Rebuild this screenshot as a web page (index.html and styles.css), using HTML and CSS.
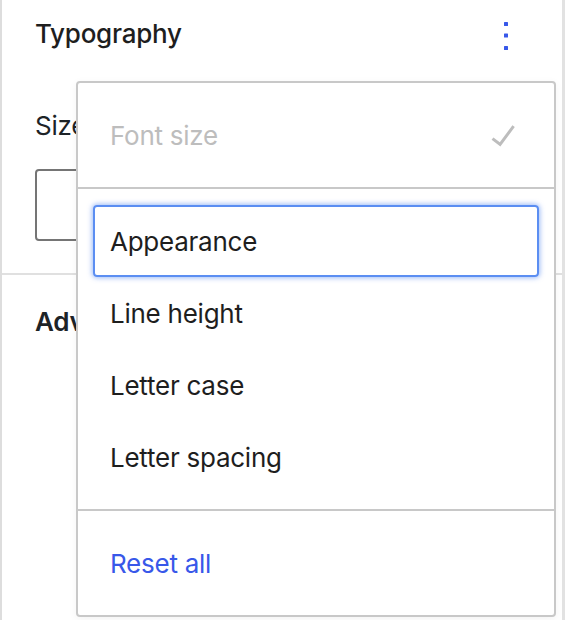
FILE: index.html
```html
<!DOCTYPE html>
<html lang="en">
<head>
<meta charset="utf-8">
<title>Typography panel</title>
<link rel="stylesheet" href="styles.css">
</head>
<body>
<div class="panel">
  <section class="panel-section typography">
    <div class="panel-header">
      <h2 class="panel-title">Typography</h2>
      <button class="menu-toggle" aria-label="Typography options">
        <svg width="48" height="48" viewBox="0 0 48 48" aria-hidden="true">
          <rect x="22" y="19" width="4" height="4" rx="0.5"/>
          <rect x="22" y="30.5" width="4" height="4" rx="0.5"/>
          <rect x="22" y="43" width="4" height="4" rx="0.5"/>
        </svg>
      </button>
    </div>
    <div class="field-label">Size</div>
    <div class="size-input"></div>
  </section>
  <section class="panel-section advanced">
    <h2 class="panel-subtitle">Adv<span class="hidden-rest">anced</span></h2>
  </section>

  <div class="popover" role="menu">
    <div class="menu-group">
      <div class="menu-item disabled">
        <span>Font size</span>
        <svg class="check" width="48" height="48" viewBox="0 0 24 24" aria-hidden="true">
          <path d="M16.7 7.1l-6.3 8.5-3.2-2.4-.9 1.2 4.4 3.3 7.2-9.7z"/>
        </svg>
      </div>
    </div>
    <div class="menu-group">
      <div class="menu-item focused">Appearance</div>
      <div class="menu-item">Line height</div>
      <div class="menu-item">Letter case</div>
      <div class="menu-item">Letter spacing</div>
    </div>
    <div class="menu-group">
      <div class="menu-item reset">Reset all</div>
    </div>
  </div>
</div>
</body>
</html>
```

FILE: styles.css
```css
* { box-sizing: border-box; }

html, body {
  margin: 0;
  padding: 0;
  background: #ffffff;
}

body {
  font-family: Inter, "Noto Sans", "Liberation Sans", sans-serif;
  letter-spacing: -0.25px;
  width: 568px;
  height: 620px;
  overflow: hidden;
}

.panel {
  position: relative;
  width: 565px;
  height: 620px;
  border-left: 2px solid #dddddd;
  border-right: 3px solid #e2e2e2;
  background: #ffffff;
}

.panel-section {
  padding: 0 32px 0 33px;
}

.typography {
  padding-top: 10px;
  padding-bottom: 32px;
  border-bottom: 2px solid #e0e0e0;
}

.panel-header {
  display: flex;
  align-items: center;
  justify-content: space-between;
  height: 48px;
}

.panel-title {
  margin: 0;
  font-size: 26px;
  font-weight: 500;
  color: #1e1e1e;
  line-height: 32px;
}

.menu-toggle {
  width: 48px;
  height: 48px;
  padding: 0;
  margin: 0;
  border: 0;
  background: none;
  fill: #3858e9;
  display: block;
  margin-top: -14px;
}

.menu-toggle svg { display: block; }

.field-label {
  margin-top: 52px;
  font-size: 26px;
  line-height: 32px;
  color: #1d2327;
}

.size-input {
  margin-top: 27px;
  width: 496px;
  height: 72px;
  border: 2px solid #757575;
  border-radius: 4px;
}

.advanced {
  padding-top: 31px;
}

.panel-subtitle {
  margin: 0;
  font-size: 26px;
  line-height: 32px;
  font-weight: 600;
  color: #1d2327;
}

.hidden-rest {
  visibility: hidden;
}

.popover {
  position: absolute;
  left: 74px;
  top: 81px;
  width: 480px;
  background: #ffffff;
  border: 2px solid #c8c8c8;
  border-radius: 4px;
  box-shadow: 0 2px 8px rgba(0, 0, 0, 0.05);
}

.menu-group {
  padding: 16px 15px 16px 15px;
}

.menu-group + .menu-group {
  border-top: 2px solid #c8c8c8;
}

.menu-item {
  display: flex;
  align-items: center;
  justify-content: space-between;
  height: 72px;
  padding: 0 12px 0 17px;
  font-size: 26px;
  color: #1e1e1e;
  border-radius: 4px;
}

.menu-item.disabled {
  color: #bdbdbd;
}

.check {
  fill: #bdbdbd;
  display: block;
}

.menu-item.focused {
  border: 2px solid #5b8ef2;
  padding-left: 15px;
  box-shadow: 0 0 5px 1px rgba(91, 142, 242, 0.6);
}

.menu-item.reset {
  color: #3858e9;
}
```
